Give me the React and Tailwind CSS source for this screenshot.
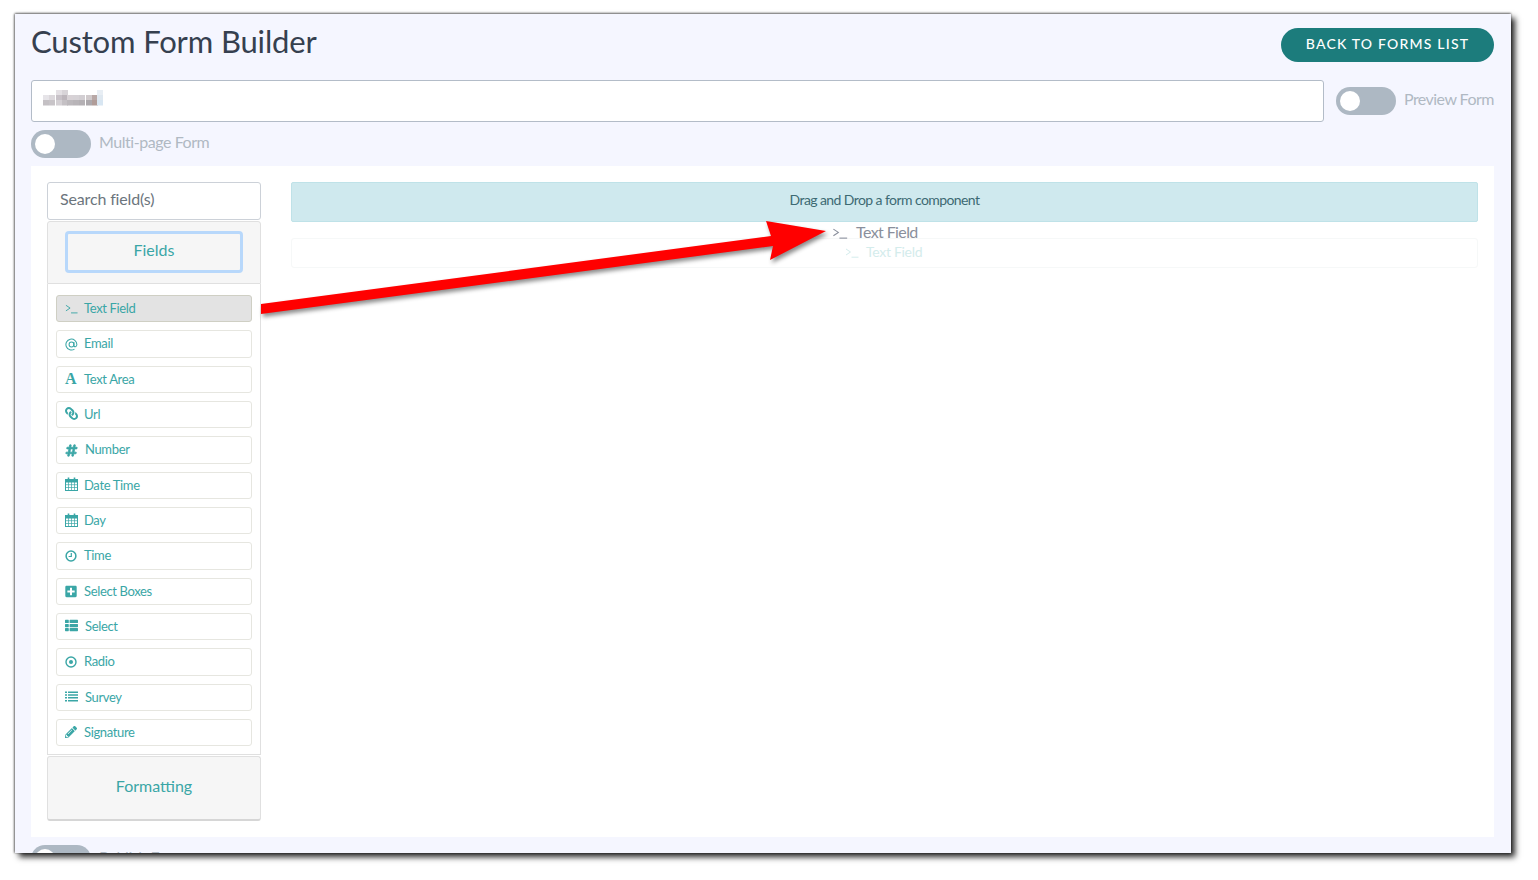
import { FaHashtag, FaLink, FaPlusSquare, FaThList, FaPencilAlt } from "react-icons/fa";

const TerminalIcon = ({ className }) => (
  <svg viewBox="0 0 14 10" className={className} fill="none" stroke="currentColor" strokeWidth="1">
    <path d="M1 1 L5.5 4 L1 7" />
    <path d="M6.5 9.2 H13.5" />
  </svg>
);

const AtIcon = () => (
  <svg viewBox="0 0 14 14" className="w-[13px] h-[13px]" fill="none" stroke="currentColor" strokeWidth="1.1">
    <circle cx="7" cy="7" r="2.6" />
    <path d="M9.6 4.4 V8.2 C9.6 10 12.8 10 12.8 7 A5.9 5.9 0 1 0 10.2 12" />
  </svg>
);

const CalendarIcon = () => (
  <svg viewBox="0 0 13 14" className="w-[13px] h-[14px] mb-[2px]" fill="none" stroke="currentColor" strokeWidth="1">
    <rect x="0.5" y="2.5" width="12" height="11" />
    <path d="M0.5 2.5 H12.5 V5 H0.5 Z" fill="currentColor" />
    <path d="M3.5 0.5 V3 M9.5 0.5 V3" strokeWidth="1.6" />
    <path d="M0.5 7.7 H12.5 M0.5 10.5 H12.5 M3.5 5 V13.5 M6.5 5 V13.5 M9.5 5 V13.5" strokeWidth="0.7" />
  </svg>
);

const ClockIcon = () => (
  <svg viewBox="0 0 12 12" className="w-[12px] h-[12px] mb-[1px]" fill="none" stroke="currentColor" strokeWidth="1.5">
    <circle cx="6" cy="6" r="4.9" />
    <path d="M6.3 3 V6.5 H3.6" strokeWidth="1.2" />
  </svg>
);

const RadioIcon = () => (
  <svg viewBox="0 0 12 12" className="w-[12px] h-[12px] mb-[1px]" fill="none" stroke="currentColor" strokeWidth="1.4">
    <circle cx="6" cy="6" r="5" />
    <circle cx="6" cy="6" r="2" fill="currentColor" stroke="none" />
  </svg>
);

const ListIcon = () => (
  <svg viewBox="0 0 13 11" className="w-[13px] h-[11px] mb-[2px]" fill="currentColor">
    <path d="M0 0.5 H2 V2 H0 Z M3 0.5 H13 V2 H3 Z M0 3.3 H2 V4.8 H0 Z M3 3.3 H13 V4.8 H3 Z M0 6.1 H2 V7.6 H0 Z M3 6.1 H13 V7.6 H3 Z M0 8.9 H2 V10.4 H0 Z M3 8.9 H13 V10.4 H3 Z" />
  </svg>
);

const FontIcon = () => (
  <span className="w-[13px] text-[16px] leading-none font-bold font-['Liberation_Serif',serif]">A</span>
);

const fields = [
  { label: "Text Field", icon: <TerminalIcon className="w-[13px] h-[10px]" />, active: true },
  { label: "Email", icon: <AtIcon />, gap: "gap-[6px]" },
  { label: "Text Area", icon: <FontIcon /> },
  { label: "Url", icon: <FaLink className="w-[13px] h-[13px] -scale-x-100 mb-[2px]" /> },
  { label: "Number", icon: <FaHashtag className="w-[13px] h-[13px] stroke-[30]" />, gap: "gap-[7px]" },
  { label: "Date Time", icon: <CalendarIcon /> },
  { label: "Day", icon: <CalendarIcon /> },
  { label: "Time", icon: <ClockIcon />, gap: "gap-[7px]" },
  { label: "Select Boxes", icon: <FaPlusSquare className="w-[12px] h-[13px]" />, gap: "gap-[7px]" },
  { label: "Select", icon: <FaThList className="w-[13px] h-[13px] mb-[2px]" />, gap: "gap-[7px]" },
  { label: "Radio", icon: <RadioIcon />, gap: "gap-[7px]" },
  { label: "Survey", icon: <ListIcon />, gap: "gap-[7px]" },
  { label: "Signature", icon: <FaPencilAlt className="w-[12px] h-[12px] mb-[1px]" />, gap: "gap-[7px]" },
];

const Toggle = () => (
  <div className="w-[60px] h-[28px] rounded-full bg-[#adb8c3] flex items-center pl-[4px] shrink-0">
    <div className="w-[20px] h-[20px] rounded-full bg-white" />
  </div>
);

const blur = [
  [13, 0, "#e4e0e4"], [19, 0, "#d8d4d8"], [54, 0, "#e8eef4"],
  [0, 5, "#e6e4e8"], [6, 5, "#dcd8dc"], [13, 5, "#c8c2c8"], [19, 5, "#bdb6bc"], [24, 5, "#d8d2d6"], [30, 5, "#d6d2d6"], [36, 5, "#d2ced2"], [43, 5, "#d0cacc"], [49, 5, "#b8a8a6"], [54, 5, "#dfe8f0"],
  [0, 10, "#c4c0c4"], [6, 10, "#c8c4c8"], [13, 10, "#d4d0d4"], [19, 10, "#c4c0c4"], [24, 10, "#bcb8bc"], [30, 10, "#b8b4b8"], [36, 10, "#b4b0b4"], [43, 10, "#aca8ac"], [49, 10, "#b09c98"], [54, 10, "#d8e6f2"],
];

const App = () => {
  return (
    <div className="relative h-[880px] overflow-hidden bg-white font-['Lato',sans-serif]">
      <div className="absolute left-[15px] top-[14px] w-[1496px] h-[839px] overflow-hidden bg-[#f5f6ff] shadow-[0_-1px_2px_rgba(0,0,0,0.45),-1px_0_2px_rgba(0,0,0,0.4),4px_4px_6px_rgba(0,0,0,0.85)] pl-[16px] pr-[17px] pt-[14px]">
        <div className="flex justify-between items-start h-[52px]">
          <h1 className="text-[31px] leading-[26px] text-[#36404f] tracking-[-0.15px]">Custom Form Builder</h1>
          <button className="w-[213px] h-[34px] pb-[3px] rounded-full bg-[#1c7c7c] text-white text-[14px] font-medium tracking-[1.2px]">
            BACK TO FORMS LIST
          </button>
        </div>

        <div className="flex items-center h-[42px]">
          <div className="w-[1293px] shrink-0 h-[42px] bg-white border border-[#b3bcc8] rounded-[3px] flex items-center pl-[11px]">
            <svg width="60" height="16" className="mb-[7px]">
              {blur.map(([x, y, c], i) => (
                <rect key={i} x={x} y={y} width="6" height="5.5" fill={c} />
              ))}
            </svg>
          </div>
          <div className="ml-[12px]">
            <Toggle />
          </div>
          <span className="ml-[8px] pb-[5px] whitespace-nowrap text-[16px] text-[#b0b9c3] tracking-[-0.55px]">Preview Form</span>
        </div>

        <div className="flex items-center gap-[8px] mt-[8px] h-[28px]">
          <Toggle />
          <span className="pb-[5px] text-[16px] text-[#b0b9c3] tracking-[-0.45px]">Multi-page Form</span>
        </div>

        <div className="mt-[8px] h-[671px] bg-white flex p-[16px] gap-[30px]">
          <div className="w-[214px] shrink-0 flex flex-col">
            <div className="h-[38px] pb-[3px] border border-[#ccd1d8] rounded-[3px] flex items-center pl-[12px] text-[16px] text-[#6c757d] tracking-[-0.15px]">
              Search field(s)
            </div>
            <div className="h-[63px] mt-[1px] bg-[#f6f6f6] border border-[#e0e0e0] rounded-t-[3px] flex items-center justify-center px-[17px]">
              <div className="w-full h-[42px] pb-[4px] rounded-[4px] border-[3px] border-[#b8d8fb] flex items-center justify-center text-[16px] text-[#3aa6a6]">
                Fields
              </div>
            </div>
            <div className="h-[473px] border border-t-0 border-[#e0e0e0] flex flex-col gap-[8px] px-[8px] pt-[11.4px]">
              {fields.map((f) => (
                <div
                  key={f.label}
                  className={`h-[27.33px] rounded-[3px] border flex items-center pl-[8px] text-[13px] text-[#3aa6a6] tracking-[-0.35px] ${f.gap || "gap-[6px]"} ${
                    f.active ? "bg-[#e3e3e3] border-[#cfcfc4]" : "bg-white border-[#e6e6e0]"
                  }`}
                >
                  {f.icon}
                  <span>{f.label}</span>
                </div>
              ))}
            </div>
            <div className="h-[65px] pb-[5px] mt-[1px] bg-[#f6f6f6] border border-[#e0e0e0] border-b-2 border-b-[#d6d6d6] rounded-[3px] flex items-center justify-center text-[16px] text-[#3aa6a6]">
              Formatting
            </div>
          </div>

          <div className="flex-1 relative">
            <div className="h-[40px] pb-[5px] bg-[#cfe9ee] border border-[#bfe2e8] rounded-[2px] flex items-center justify-center text-[14px] text-[#3d6a73] tracking-[-0.58px]">
              Drag and Drop a form component
            </div>
            <div className="mt-[16px] h-[30px] border border-[#f6f8f8] rounded-[3px]" />
            <div className="absolute left-[541px] top-[38px] flex items-center gap-[8px] text-[16px] text-[#8a8f9c] tracking-[-0.6px]">
              <TerminalIcon className="w-[16px] h-[11px] mt-[3px]" />
              <span>Text Field</span>
            </div>
            <div className="absolute left-[554px] top-[59px] flex items-center gap-[7px] text-[14px] text-[#d4ecec] tracking-[-0.3px]">
              <TerminalIcon className="w-[14px] h-[10px] mt-[3px]" />
              <span>Text Field</span>
            </div>
          </div>
        </div>

        <div className="flex items-center gap-[8px] mt-[8px] h-[28px]">
          <Toggle />
          <span className="pb-[5px] text-[16px] text-[#b0b9c3] tracking-[-0.45px]">Publish Form</span>
        </div>
      </div>

      <svg
        viewBox="0 0 1538 880"
        className="absolute inset-0 w-[1538px] h-[880px] pointer-events-none drop-shadow-[2px_3px_2px_rgba(0,0,0,0.45)]"
      >
        <polygon points="261,304 771,236 766,221 826,231 770,260 773,246 261,314" fill="#ff0000" />
      </svg>
    </div>
  );
};

export default App;
